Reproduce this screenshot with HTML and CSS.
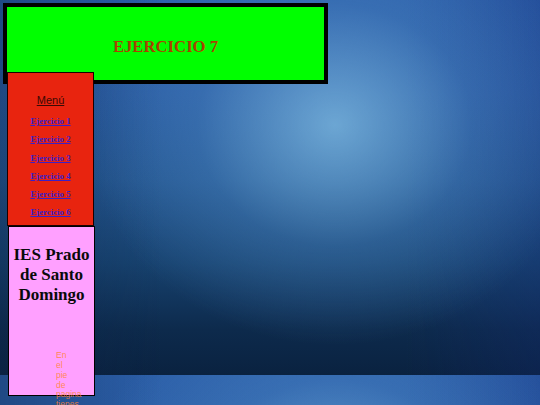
FILE: index.html
```html
<!DOCTYPE html>
<html lang="es">
<head>
<meta charset="utf-8">
<title>Ejercicio 7</title>
<link rel="stylesheet" href="styles.css">
</head>
<body>
<header class="cabecera">
  <h1 class="titulo">EJERCICIO 7</h1>
</header>
<nav class="menu">
  <p class="menu-titulo"><a href="#">Menú</a></p>
  <p class="menu-item"><a href="#">Ejercicio 1</a></p>
  <p class="menu-item"><a href="#">Ejercicio 2</a></p>
  <p class="menu-item"><a href="#">Ejercicio 3</a></p>
  <p class="menu-item"><a href="#">Ejercicio 4</a></p>
  <p class="menu-item"><a href="#">Ejercicio 5</a></p>
  <p class="menu-item"><a href="#">Ejercicio 6</a></p>
</nav>
<aside class="lateral">
  <h2 class="instituto">IES Prado de Santo Domingo</h2>
  <p class="nota">En el pie de pagina tienes</p>
</aside>
</body>
</html>
```
FILE: styles.css
```css
html, body {
  margin: 0;
  padding: 0;
}

body {
  width: 540px;
  height: 405px;
  overflow: hidden;
  font-family: "Liberation Serif", "Times New Roman", serif;
  background-color: #0d2747;
  background-image:
    radial-gradient(ellipse 250px 220px at 335px 125px, rgba(125, 185, 225, 0.8), rgba(80, 140, 200, 0.35) 55%, rgba(60, 120, 190, 0) 100%),
    linear-gradient(to right, rgba(12, 35, 70, 0.35) 0%, rgba(12, 35, 70, 0) 30%, rgba(12, 35, 70, 0) 75%, rgba(20, 40, 120, 0.25) 100%),
    linear-gradient(to bottom, #2b5ea8 0%, #2a5ca2 25%, #245690 48%, #17426f 70%, #0d2a4c 88%, #0a2240 100%);
  background-size: 540px 375px;
  background-repeat: repeat-y;
}

.cabecera {
  margin: 3px 0 0 3px;
  width: 317px;
  height: 73px;
  border: 4px solid #000;
  background: #00ff00;
  display: flex;
  align-items: center;
  justify-content: center;
}

.titulo {
  margin: 0;
  padding-top: 6px;
  font-size: 16.7px;
  font-weight: 700;
  color: #a84300;
  line-height: 20px;
}

.menu {
  position: relative;
  margin: -12px 0 0 7px;
  width: 85px;
  padding-top: 10px;
  border: 1px solid #1a0000;
  background: #e8240f;
  text-align: center;
}

.menu-titulo {
  margin: 11px 0 10px;
  font-family: "Liberation Sans", Arial, sans-serif;
  font-size: 11px;
}

.menu-titulo a {
  color: #3a0a04;
}

.menu-item {
  margin: 8.3px 0;
  height: 10px;
  font-size: 8.8px;
  line-height: 10px;
  font-weight: 700;
}

.menu-item:last-child {
  margin-bottom: 7.5px;
}

.menu-item a {
  color: #3a20c8;
}

.lateral {
  margin-left: 8px;
  width: 85px;
  height: 168px;
  border: 1px solid #000;
  background: #ffa0ff;
}

.instituto {
  margin: 18px 0 0;
  font-size: 17px;
  line-height: 20px;
  font-weight: 700;
  text-align: center;
  color: #0a0a0a;
}

.nota {
  margin: 46.5px 0 0 47px;
  width: 14px;
  font-family: "Liberation Sans", Arial, sans-serif;
  font-size: 8.5px;
  line-height: 9.75px;
  color: rgba(255, 130, 50, 0.85);
}
```
